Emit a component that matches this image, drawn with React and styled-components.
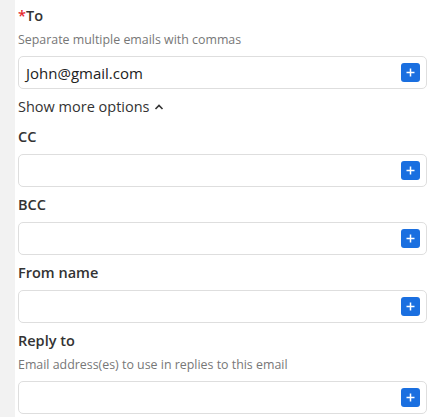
import React from 'react'
import styled, { createGlobalStyle } from 'styled-components'

const GlobalStyle = createGlobalStyle`
  html, body {
    margin: 0;
    padding: 0;
    background: #ffffff;
  }
  body {
    font-family: "Open Sans", "Noto Sans", sans-serif;
    color: #333333;
  }
`

const Page = styled.div`
  display: flex;
  min-height: 417px;
  width: 445px;
`

const Strip = styled.div`
  width: 15px;
  flex-shrink: 0;
  background: #f2f2f2;
`

const Form = styled.div`
  width: 409px;
  padding: 6px 0 0 3px;
`

const Field = styled.div`
  margin-bottom: 8px;
`

const Label = styled.div`
  font-size: 14.5px;
  font-weight: 600;
  line-height: 20px;
  color: #333333;
  margin-bottom: ${p => (p.$hasHelp ? '5px' : '7px')};
`

const Star = styled.span`
  color: #e5262a;
`

const Help = styled.div`
  font-size: 12.4px;
  line-height: 18px;
  color: #777777;
  margin-bottom: 7px;
`

const InputBox = styled.div`
  box-sizing: border-box;
  height: 33px;
  border: 1px solid #dedede;
  border-radius: 5px;
  display: flex;
  align-items: center;
  padding: 0 6px 0 7px;
`

const Value = styled.div`
  flex: 1;
  font-size: 15px;
  color: #222222;
`

const AddButton = styled.div`
  width: 19px;
  height: 19px;
  border-radius: 3px;
  background: #1a6fe0;
  display: flex;
  align-items: center;
  justify-content: center;
`

const Toggle = styled.div`
  display: flex;
  align-items: center;
  gap: 4px;
  font-size: 14.5px;
  line-height: 20px;
  color: #333333;
  margin-bottom: 10px;
`

const PlusIcon = () => (
  <svg width="9" height="9" viewBox="0 0 9 9">
    <path d="M4.5 0.5v8M0.5 4.5h8" stroke="#fff" strokeWidth="1.5" />
  </svg>
)

const Caret = () => (
  <svg width="10" height="8" viewBox="0 0 10 8">
    <path d="M1.5 6L5 2.5L8.5 6" fill="none" stroke="#333" strokeWidth="1.6" />
  </svg>
)

function EmailField({ label, required, help, value }) {
  return (
    <Field>
      <Label $hasHelp={!!help}>
        {required && <Star>*</Star>}
        {label}
      </Label>
      {help && <Help>{help}</Help>}
      <InputBox>
        <Value>{value}</Value>
        <AddButton>
          <PlusIcon />
        </AddButton>
      </InputBox>
    </Field>
  )
}

export default function App() {
  return (
    <>
      <GlobalStyle />
      <Page>
        <Strip />
        <Form>
          <EmailField
            label="To"
            required
            help="Separate multiple emails with commas"
            value="John@gmail.com"
          />
          <Toggle>
            Show more options <Caret />
          </Toggle>
          <EmailField label="CC" />
          <EmailField label="BCC" />
          <EmailField label="From name" />
          <EmailField
            label="Reply to"
            help="Email address(es) to use in replies to this email"
          />
        </Form>
      </Page>
    </>
  )
}
